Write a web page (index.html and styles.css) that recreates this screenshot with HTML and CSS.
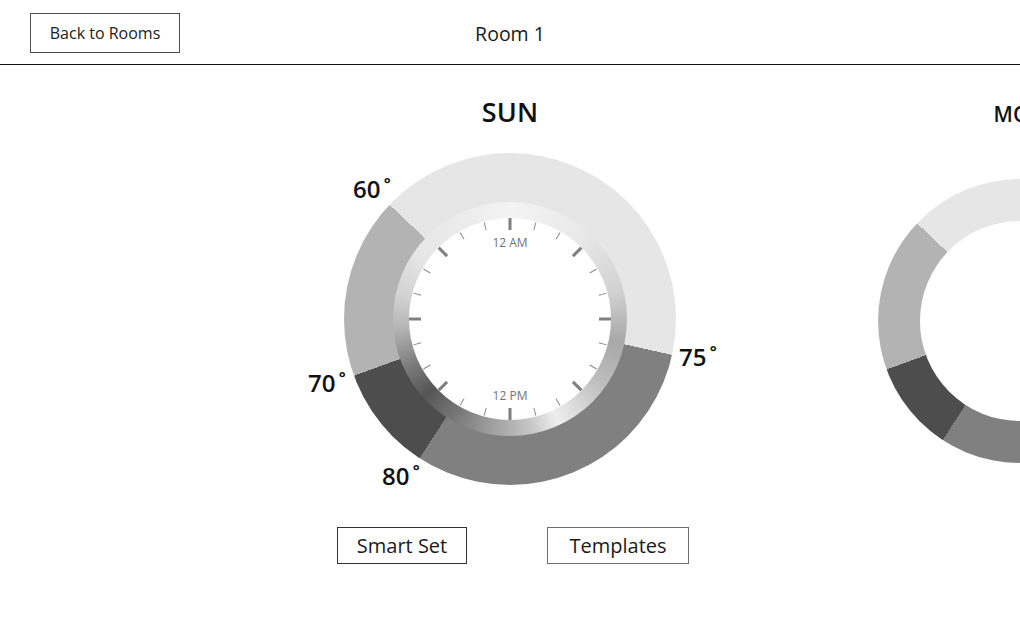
FILE: index.html
```html
<!DOCTYPE html>
<html lang="en">
<head>
<meta charset="utf-8">
<title>Room 1</title>
<link rel="stylesheet" href="styles.css">
</head>
<body>
<header class="topbar">
  <button class="btn back-btn">Back to Rooms</button>
  <h1 class="room-title">Room 1</h1>
  <div class="topbar-spacer"></div>
</header>

<main class="carousel">
  <div class="track">
    <section class="day day--active">
      <h2 class="day-title">SUN</h2>
      <div class="dial">
        <span class="temp temp--60">60<span class="deg">˚</span></span>
        <span class="temp temp--75">75<span class="deg">˚</span></span>
        <span class="temp temp--80">80<span class="deg">˚</span></span>
        <span class="temp temp--70">70<span class="deg">˚</span></span>
        <div class="bezel">
          <div class="face">
            <svg class="ticks" viewBox="-101 -101 202 202" width="202" height="202">
              <g class="major">
                <line x1="0" y1="-101" x2="0" y2="-89"/>
                <line x1="0" y1="-101" x2="0" y2="-89" transform="rotate(45)"/>
                <line x1="0" y1="-101" x2="0" y2="-89" transform="rotate(90)"/>
                <line x1="0" y1="-101" x2="0" y2="-89" transform="rotate(135)"/>
                <line x1="0" y1="-101" x2="0" y2="-89" transform="rotate(180)"/>
                <line x1="0" y1="-101" x2="0" y2="-89" transform="rotate(225)"/>
                <line x1="0" y1="-101" x2="0" y2="-89" transform="rotate(270)"/>
                <line x1="0" y1="-101" x2="0" y2="-89" transform="rotate(315)"/>
              </g>
              <g class="minor">
                <line x1="0" y1="-100" x2="0" y2="-92" transform="rotate(15)"/>
                <line x1="0" y1="-100" x2="0" y2="-92" transform="rotate(30)"/>
                <line x1="0" y1="-100" x2="0" y2="-92" transform="rotate(60)"/>
                <line x1="0" y1="-100" x2="0" y2="-92" transform="rotate(75)"/>
                <line x1="0" y1="-100" x2="0" y2="-92" transform="rotate(105)"/>
                <line x1="0" y1="-100" x2="0" y2="-92" transform="rotate(120)"/>
                <line x1="0" y1="-100" x2="0" y2="-92" transform="rotate(150)"/>
                <line x1="0" y1="-100" x2="0" y2="-92" transform="rotate(165)"/>
                <line x1="0" y1="-100" x2="0" y2="-92" transform="rotate(195)"/>
                <line x1="0" y1="-100" x2="0" y2="-92" transform="rotate(210)"/>
                <line x1="0" y1="-100" x2="0" y2="-92" transform="rotate(240)"/>
                <line x1="0" y1="-100" x2="0" y2="-92" transform="rotate(255)"/>
                <line x1="0" y1="-100" x2="0" y2="-92" transform="rotate(285)"/>
                <line x1="0" y1="-100" x2="0" y2="-92" transform="rotate(300)"/>
                <line x1="0" y1="-100" x2="0" y2="-92" transform="rotate(330)"/>
                <line x1="0" y1="-100" x2="0" y2="-92" transform="rotate(345)"/>
              </g>
              <text class="hour" x="0" y="-72">12 AM</text>
              <text class="hour" x="0" y="81">12 PM</text>
            </svg>
          </div>
        </div>
      </div>
      <div class="actions">
        <button class="btn action-btn action-btn--smart">Smart Set</button>
        <button class="btn action-btn action-btn--templates">Templates</button>
      </div>
    </section>

    <section class="day day--next">
      <h2 class="day-title">MON</h2>
      <div class="dial dial--preview">
        <div class="hole"></div>
      </div>
    </section>
  </div>
</main>
</body>
</html>
```

FILE: styles.css
```css
* {
  box-sizing: border-box;
}

html, body {
  margin: 0;
  padding: 0;
  background: #ffffff;
}

body {
  width: 1020px;
  height: 638px;
  overflow: hidden;
  font-family: "Open Sans", "Noto Sans", sans-serif;
  color: #111111;
}

.btn {
  font-family: "Open Sans", "Noto Sans", sans-serif;
  background: #ffffff;
  color: #222222;
  border-radius: 0;
  margin: 0;
  cursor: pointer;
}

/* ---------- top bar ---------- */
.topbar {
  display: grid;
  grid-template-columns: 1fr auto 1fr;
  align-items: start;
  height: 65px;
  padding: 13px 30px 0;
  border-bottom: 1px solid #111111;
}

.back-btn {
  justify-self: start;
  width: 150px;
  height: 40px;
  padding: 0;
  border: 1px solid #4d4d4d;
  font-size: 16px;
  line-height: 38px;
}

.room-title {
  margin: 8px 0 0;
  font-size: 19.5px;
  font-weight: 400;
  line-height: 26px;
  color: #1a1a1a;
}

/* ---------- carousel ---------- */
.carousel {
  overflow: hidden;
  width: 1020px;
}

.track {
  display: flex;
  padding-left: 255px;
}

.day {
  flex: 0 0 510px;
  display: flex;
  flex-direction: column;
  align-items: center;
}

.day-title {
  margin: 29px 0 0;
  font-size: 27px;
  font-weight: 600;
  line-height: 36px;
  color: #111111;
  letter-spacing: 0.2px;
}

.day--next .day-title {
  font-size: 21px;
  padding-top: 2px;
}

/* ---------- dial ---------- */
.dial {
  position: relative;
  margin-top: 23px;
  width: 332px;
  height: 332px;
  border-radius: 50%;
  display: grid;
  place-items: center;
  background: conic-gradient(
    #e6e6e6 0deg 102.5deg,
    #808080 102.5deg 213deg,
    #4d4d4d 213deg 250deg,
    #b3b3b3 250deg 313.5deg,
    #e6e6e6 313.5deg 360deg
  );
}

.dial--preview {
  transform: scale(0.855);
}

.hole {
  width: 234px;
  height: 234px;
  border-radius: 50%;
  background: #ffffff;
}

.bezel {
  width: 234px;
  height: 234px;
  border-radius: 50%;
  display: grid;
  place-items: center;
  background: conic-gradient(
    #f3f3f3 0deg,
    #e9e9e9 40deg,
    #d2d2d2 75deg,
    #a8a8a8 102deg,
    #bdbdbd 125deg,
    #eeeeee 155deg,
    #c4c4c4 170deg,
    #a2a2a2 188deg,
    #7a7a7a 208deg,
    #555555 228deg,
    #7c7c7c 245deg,
    #b4b4b4 265deg,
    #d2d2d2 282deg,
    #e6e6e6 305deg,
    #ececec 335deg,
    #f3f3f3 360deg
  );
}

.face {
  width: 202px;
  height: 202px;
  border-radius: 50%;
  background: #ffffff;
  overflow: hidden;
}

.ticks {
  display: block;
}

.ticks .major line {
  stroke: #7f7f7f;
  stroke-width: 3;
}

.ticks .minor line {
  stroke: #8a8a8a;
  stroke-width: 1;
}

.ticks .hour {
  font-family: "Open Sans", "Noto Sans", sans-serif;
  font-size: 12px;
  font-weight: 400;
  fill: #737373;
  text-anchor: middle;
}

/* temperature labels placed around the ring */
.temp {
  position: absolute;
  font-size: 24px;
  font-weight: 600;
  line-height: 24px;
  color: #111111;
  white-space: nowrap;
}

.deg {
  margin-left: 3px;
}

.temp--60 { left: 9px;   top: 24px; }
.temp--75 { left: 335px; top: 192px; }
.temp--70 { left: -36px; top: 218px; }
.temp--80 { left: 38px;  top: 311px; }

/* ---------- actions ---------- */
.actions {
  margin-top: 42px;
  display: grid;
  grid-template-columns: 216px 216px;
  justify-items: center;
}

.action-btn {
  height: 37px;
  font-size: 20px;
  line-height: 35px;
  color: #1a1a1a;
}

.action-btn--smart {
  padding: 0 19px;
  border: 1px solid #333333;
}

.action-btn--templates {
  padding: 0 21px;
  border: 1px solid #6e6e6e;
}
```
